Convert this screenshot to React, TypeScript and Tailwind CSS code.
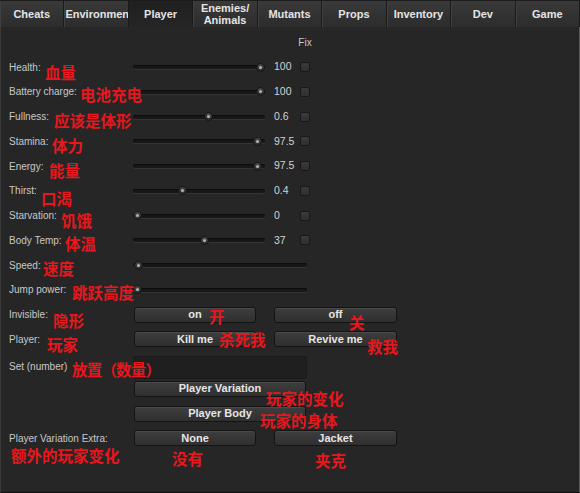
import React from "react";

const tabs = ["Cheats", "Environment", "Player", "Enemies/\nAnimals", "Mutants", "Props", "Inventory", "Dev", "Game"];

type Row = { label: string; value?: string; pos: number; check: boolean; wide?: boolean };

const sliderRows: Row[] = [
  { label: "Health:", value: "100", pos: 127, check: true },
  { label: "Battery charge:", value: "100", pos: 127, check: true },
  { label: "Fullness:", value: "0.6", pos: 75, check: true },
  { label: "Stamina:", value: "97.5", pos: 124, check: true },
  { label: "Energy:", value: "97.5", pos: 124, check: true },
  { label: "Thirst:", value: "0.4", pos: 49, check: true },
  { label: "Starvation:", value: "0", pos: 4, check: true },
  { label: "Body Temp:", value: "37", pos: 71, check: true },
  { label: "Speed:", pos: 5, check: false, wide: true },
  { label: "Jump power:", pos: 4, check: false, wide: true },
];

const notes: { t: string; x: number; y: number; cls?: string }[] = [
  { t: "血量", x: 45, y: 64 },
  { t: "电池充电", x: 80, y: 86 },
  { t: "应该是体形", x: 54, y: 112 },
  { t: "体力", x: 52, y: 137 },
  { t: "能量", x: 49, y: 162 },
  { t: "口渴", x: 41, y: 190 },
  { t: "饥饿", x: 61, y: 212 },
  { t: "体温", x: 65, y: 235 },
  { t: "速度", x: 43, y: 260 },
  { t: "跳跃高度", x: 72, y: 284 },
  { t: "隐形", x: 53, y: 312 },
  { t: "开", x: 209, y: 308 },
  { t: "关", x: 349, y: 314 },
  { t: "玩家", x: 47, y: 336 },
  { t: "杀死我", x: 219, y: 331 },
  { t: "救我", x: 367, y: 338 },
  { t: "放置（数量）", x: 72, y: 361, cls: "tracking-[-0.8px]" },
  { t: "玩家的变化", x: 266, y: 390 },
  { t: "玩家的身体", x: 260, y: 412 },
  { t: "额外的玩家变化", x: 11, y: 447 },
  { t: "没有", x: 172, y: 450 },
  { t: "夹克", x: 315, y: 452 },
];

function Slider({ width, pos }: { width: number; pos: number }) {
  return (
    <div className="relative h-[9px] flex items-center" style={{ width }}>
      <div className="w-full h-[4px] rounded-full bg-[#181818] shadow-[inset_0_1px_1px_#0c0c0c,0_1px_0_#343434]" />
      <div
        className="absolute top-0 w-[9px] h-[9px] rounded-full border border-[#141414] bg-gradient-to-b from-[#4a4a4a] to-[#2b2b2b] flex items-center justify-center"
        style={{ left: pos - 4.5 }}
      >
        <div className="w-[3px] h-[3px] rounded-full bg-[#b5b5b5]" />
      </div>
    </div>
  );
}

function Check() {
  return (
    <div className="w-[10px] h-[10px] rounded-[2px] border border-[#181818] bg-gradient-to-b from-[#3a3a3a] to-[#303030]" />
  );
}

function Btn({ children, w }: { children: React.ReactNode; w: string }) {
  return (
    <div
      className={`${w} h-[16px] rounded-[3px] border border-[#141414] bg-gradient-to-b from-[#3e3e3e] to-[#2f2f2f] shadow-[inset_0_1px_0_#4a4a4a] flex items-center justify-center text-[11px] font-bold text-[#e6e6e6] leading-none`}
    >
      {children}
    </div>
  );
}

export default function App() {
  return (
    <div
      className="relative w-[580px] h-[493px] bg-[#262626] overflow-hidden"
      style={{ fontFamily: '"Liberation Sans", Arial, sans-serif' }}
    >
      <div className="grid grid-cols-9 h-[27px] border-t border-[#1c1c1c]">
        {tabs.map((t, i) => (
          <div
            key={t}
            className={`flex items-center overflow-hidden whitespace-pre text-center text-[11px] leading-[12px] font-bold text-[#e4e4e4] border-r border-[#1a1a1a] ${
              i === 1 ? "justify-start pl-[1px]" : "justify-center"
            } ${
              i === 2
                ? "bg-gradient-to-b from-[#202020] to-[#252525]"
                : "bg-gradient-to-b from-[#393939] to-[#2c2c2c] shadow-[inset_1px_0_0_#404040]"
            }`}
          >
            {t}
          </div>
        ))}
      </div>
      <div className="h-[466px] border-l border-r border-b border-l-[#3a3a3a] border-r-[#5a5a5a] border-b-[#111] pt-[3px] pl-[8px] text-[10px] text-[#c8c8c8]">
        <div className="flex items-center h-[24.75px]">
          <div className="w-[124px]" />
          <div className="w-[132px]" />
          <div className="w-[35px]" />
          <div className="w-[10px] flex justify-center text-[10px] text-[#c8c8c8]">Fix</div>
        </div>
        {sliderRows.map((r) => (
          <div key={r.label} className="flex items-center h-[24.75px]">
            <div className="w-[124px]">{r.label}</div>
            <Slider width={r.wide ? 174 : 132} pos={r.pos} />
            {!r.wide && (
              <>
                <div className="w-[9px]" />
                <div className="w-[26px] text-[10.5px] text-[#d2d2d2]">{r.value}</div>
                <Check />
              </>
            )}
          </div>
        ))}
        <div className="flex items-center h-[24.75px]">
          <div className="w-[125px]">Invisible:</div>
          <Btn w="w-[122px]">on</Btn>
          <div className="w-[18px]" />
          <Btn w="w-[123px]">off</Btn>
        </div>
        <div className="flex items-center h-[24.75px]">
          <div className="w-[125px]">Player:</div>
          <Btn w="w-[122px]">Kill me</Btn>
          <div className="w-[18px]" />
          <Btn w="w-[123px]">Revive me</Btn>
        </div>
        <div className="flex items-start h-[24.75px]">
          <div className="w-[124px] mt-[7px]">Set (number)</div>
          <div className="mt-[4px] w-[174px] h-[23px] rounded-[3px] border border-[#191919] bg-[#1f1f1f]" />
        </div>
        <div className="flex items-center h-[24.75px]">
          <div className="w-[125px]" />
          <Btn w="w-[172px]">Player Variation</Btn>
        </div>
        <div className="flex items-center h-[24.75px]">
          <div className="w-[125px]" />
          <Btn w="w-[172px]">Player Body</Btn>
        </div>
        <div className="flex items-center h-[24.75px]">
          <div className="w-[125px]">Player Variation Extra:</div>
          <Btn w="w-[122px]">None</Btn>
          <div className="w-[18px]" />
          <Btn w="w-[123px]">Jacket</Btn>
        </div>
      </div>
      {notes.map((n) => (
        <div
          key={n.t}
          className={`absolute text-[15.5px] leading-[16px] font-bold text-[#e8161d] whitespace-nowrap ${n.cls ?? ""}`}
          style={{ left: n.x, top: n.y, fontFamily: '"Noto Sans CJK SC", sans-serif' }}
        >
          {n.t}
        </div>
      ))}
    </div>
  );
}
